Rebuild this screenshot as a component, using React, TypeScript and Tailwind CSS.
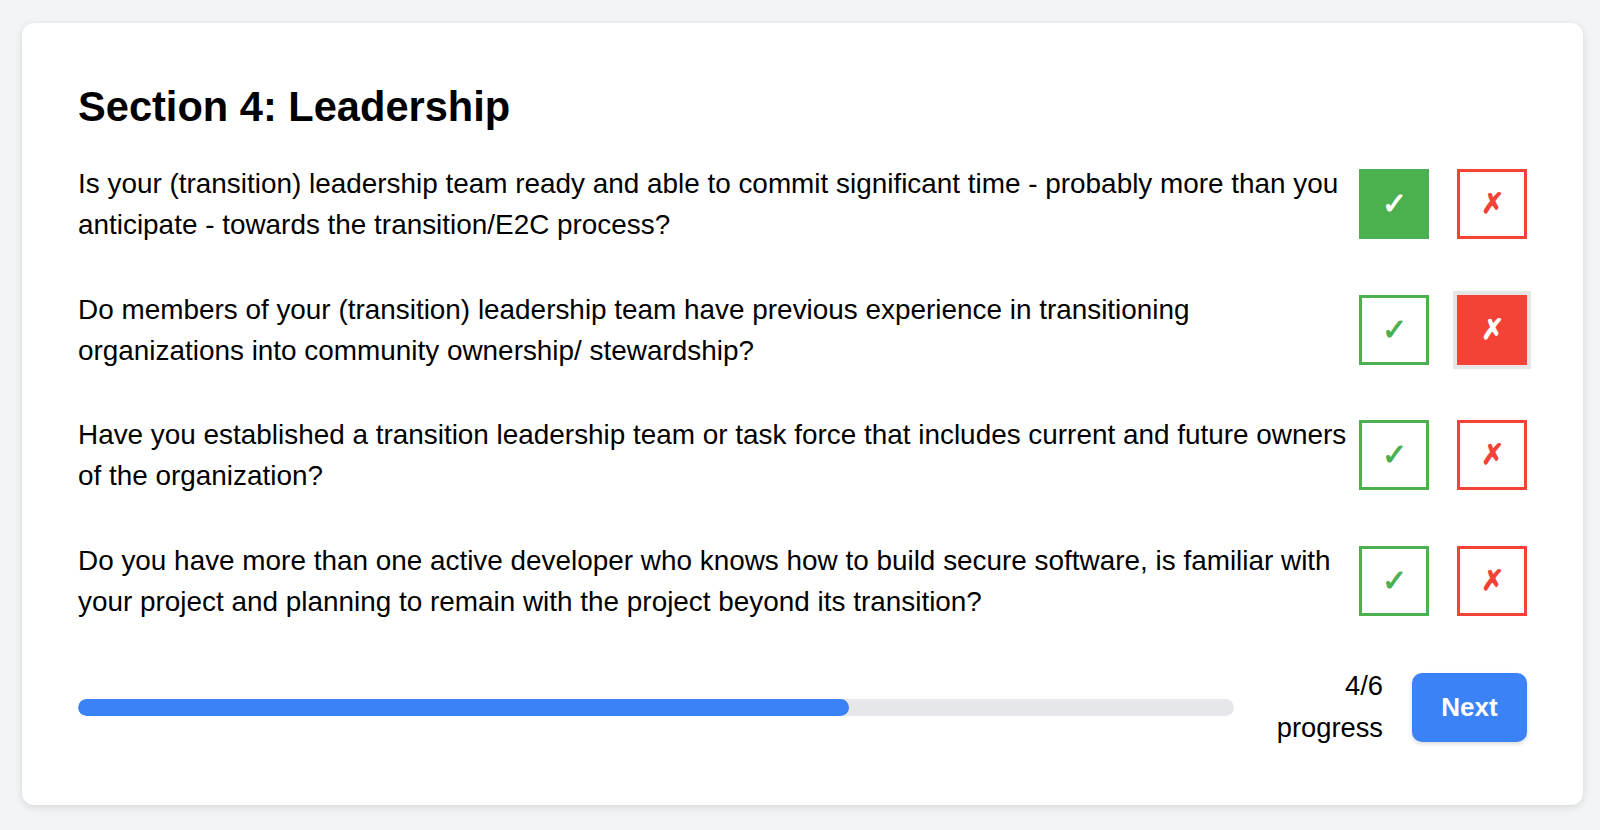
import { useState } from "react";

//* data *//
const questions = [
  "Is your (transition) leadership team ready and able to commit significant time - probably more than you anticipate - towards the transition/E2C process?",
  "Do members of your (transition) leadership team have previous experience in transitioning organizations into community ownership/ stewardship?",
  "Have you established a transition leadership team or task force that includes current and future owners of the organization?",
  "Do you have more than one active developer who knows how to build secure software, is familiar with your project and planning to remain with the project beyond its transition?",
];

type Answer = "yes" | "no" | null;

const AnswerButtons = ({
  value,
  onChange,
}: {
  value: Answer;
  onChange: (v: Answer) => void;
}) => (
  <div className="flex shrink-0 items-center gap-[28px]">
    <button
      type="button"
      onClick={() => onChange("yes")}
      className={`flex h-[70px] w-[70px] items-center justify-center border-[3px] border-[#4caf50] text-[30px] font-bold leading-none ${
        value === "yes" ? "bg-[#4caf50] text-white" : "bg-white text-[#4caf50]"
      }`}
    >
      ✓
    </button>
    <button
      type="button"
      onClick={() => onChange("no")}
      className={`flex h-[70px] w-[70px] items-center justify-center border-[3px] border-[#f44336] text-[28px] font-bold leading-none ${
        value === "no"
          ? "bg-[#f44336] text-white outline-[4px] outline-solid outline-[#e6e6e6]"
          : "bg-white text-[#f44336]"
      }`}
    >
      ✗
    </button>
  </div>
);

export default function App() {
  const [answers, setAnswers] = useState<Answer[]>(["yes", "no", null, null]);

  const setAnswer = (i: number, v: Answer) =>
    setAnswers((prev) => prev.map((a, idx) => (idx === i ? v : a)));

  return (
    <div
      className="min-h-[830px] bg-[#f3f4f6] pl-[22px] pr-[17px] pt-[23px] pb-[27px]"
      style={{ fontFamily: '"Liberation Sans", Arial, Helvetica, sans-serif' }}
    >
      <div className="rounded-xl bg-white p-[56px] shadow-[0_2px_8px_rgba(0,0,0,0.12)]">
        <h2 className="mb-[28px] text-[41.6px] font-bold leading-[56px] text-black">
          Section 4: Leadership
        </h2>

        <div className="flex flex-col gap-[43.5px]">
          {questions.map((q, i) => (
            <div key={i} className="flex items-center gap-[10px]">
              <p className="flex-1 text-[27.9px] leading-[41px] text-black">{q}</p>
              <AnswerButtons value={answers[i]} onChange={(v) => setAnswer(i, v)} />
            </div>
          ))}

          <div className="flex items-center">
            <div className="h-[17px] flex-1 overflow-hidden rounded-full bg-[#e5e7eb]">
              <div className="h-full rounded-full bg-[#3b82f6]" style={{ width: `${(4 / 6) * 100}%` }} />
            </div>
            <div className="ml-[43px] text-right text-[27.3px] leading-[42px] text-black">
              4/6
              <br />
              progress
            </div>
            <button
              type="button"
              className="ml-[29px] h-[69px] w-[115px] rounded-[10px] bg-[#3b82f6] text-[26px] font-bold text-white shadow-[0_2px_4px_rgba(0,0,0,0.15)]"
            >
              Next
            </button>
          </div>
        </div>
      </div>
    </div>
  );
}
